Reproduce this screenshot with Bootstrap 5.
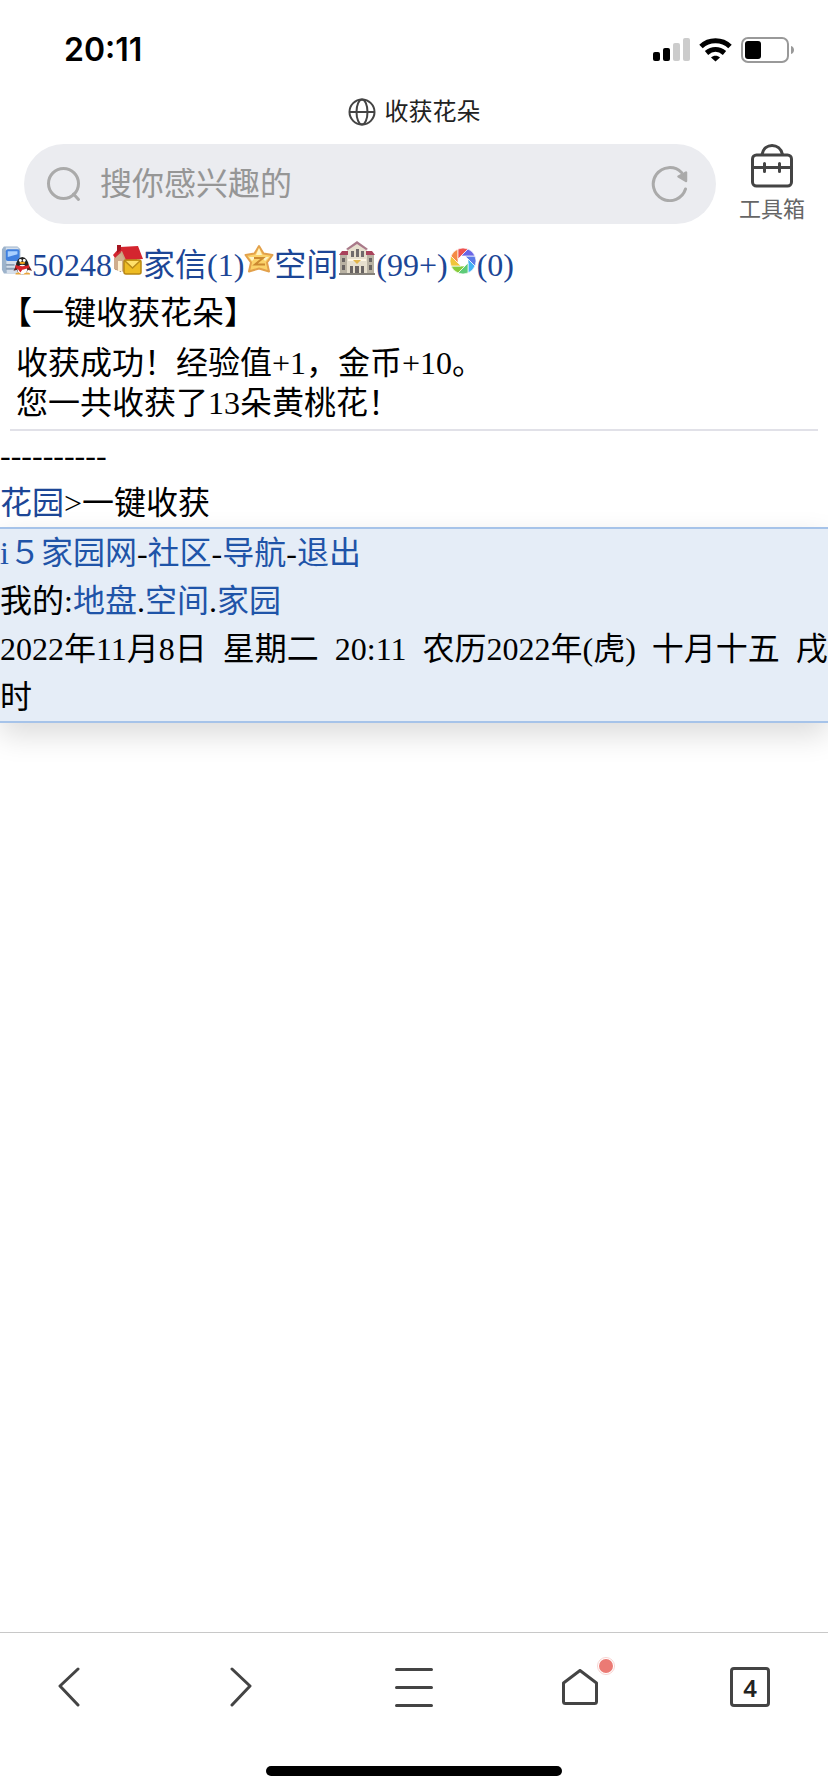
<!DOCTYPE html>
<html lang="zh-CN">
<head>
<meta charset="utf-8">
<meta name="viewport" content="width=device-width, initial-scale=1">
<title>收获花朵</title>
<link href="https://cdn.jsdelivr.net/npm/bootstrap@5.3.0/dist/css/bootstrap.min.css" rel="stylesheet">
<style>
  body { font-family: "Liberation Serif", "Noto Sans CJK SC", serif; font-size: 32px; line-height: 48px; color: #000; background: #fff; }
  a { color: #1c4696; text-decoration: none; }
  svg { display: block; flex-shrink: 0; }
  .ui-text { font-family: "Inter", "Noto Sans CJK SC", sans-serif; }
  .status-bar { padding: 32px 34px 26px 64px; line-height: 36px; }
  .clock { font-size: 32px; font-weight: 600; }
  .page-title { font-size: 24px; line-height: 36px; gap: 9px; color: #222; font-weight: 400; }
  .search-row { padding: 14px 0 16px 24px; }
  .search-box { height: 80px; background: #ebecf0; padding: 0 28px 0 23px; }
  .search-box input { font-size: 32px; line-height: 48px; padding: 0 0 0 19px; color: #333; min-width: 0; }
  .search-box input::placeholder { color: #969696; opacity: 1; }
  .search-box input:focus { outline: none; }
  .plain-btn { background: none; border: 0; padding: 0; color: #444; }
  .tools { width: 112px; font-size: 22px; line-height: 30px; color: #666; }
  .tools span { padding-top: 6px; }
  .shortcuts svg { display: inline-block; vertical-align: baseline; }
  .notice { margin: 6px 10px 0; padding: 0 6px 6px; line-height: 40px; border-bottom: 2px solid #e1e1e8; }
  .site-foot { background: #e5edf7; border-top: 2px solid #a6c3e9; border-bottom: 2px solid #a6c3e9; box-shadow: 0 12px 28px rgba(0,0,0,.14); }
  .site-foot a { color: #1f54a8; }
  .tool-bar { border-top: 1px solid #c8c8c8; background: #fff; }
  .tool-nav { height: 108px; padding: 0 47px 0 43px; }
  .tool-nav button { height: 60px; }
  .w-arrow { width: 52px; } .w-menu { width: 54px; } .w-home { width: 38px; } .w-tabs { width: 62px; }
  .dot { position: absolute; top: 0; right: -16px; width: 18px; height: 18px; }
  .tab-count { width: 40px; height: 40px; border: 3px solid #444; border-radius: 4px; font: 600 24px/36px "Noto Sans", sans-serif; color: #222; }
  .home-line { width: 296px; height: 10px; margin: 25px auto 16px; background: #000; }
</style>
</head>
<body class="d-flex flex-column min-vh-100">
<header class="ui-text">
  <div class="status-bar d-flex align-items-center justify-content-between">
    <span class="clock">20:11</span>
    <div class="d-flex align-items-center" style="gap:9px">
      <svg width="37" height="24" viewBox="0 0 37 24"><g fill="#000"><rect y="14" width="7" height="9" rx="2"/><rect x="10" y="10" width="7" height="13" rx="2"/></g><g fill="#ccc"><rect x="20" y="5" width="7" height="18" rx="2"/><rect x="30" width="7" height="23" rx="2"/></g></svg>
      <svg width="33" height="24" viewBox="0 0 33 24"><g fill="none" stroke="#000" stroke-width="5"><path d="M2 8.500C10 .8 23 .8 31 8.500"/><path d="M7.500 15C13 10.200 20 10.200 25.500 15"/></g><path d="M16.500 23.500L12 19.500c2.500-2.300 6.500-2.300 9 0z"/></svg>
      <svg width="53" height="26" viewBox="0 0 53 26"><rect x="1" y="1" width="46" height="24" rx="6" fill="none" stroke="#999" stroke-width="2"/><rect x="4" y="4" width="16" height="18" rx="3"/><path d="M50 9c4 1 4 7 0 8z" fill="#999"/></svg>
    </div>
  </div>
  <h1 class="page-title d-flex align-items-center justify-content-center m-0">
    <svg width="28" height="28" viewBox="0 0 28 28" fill="none" stroke="#444" stroke-width="2"><circle cx="14" cy="14" r="12.500"/><ellipse cx="14" cy="14" rx="5.500" ry="12.500"/><path d="M1.500 14h25"/></svg>
    <span>收获花朵</span>
  </h1>
  <div class="search-row d-flex align-items-center">
    <form class="search-box rounded-pill d-flex align-items-center flex-grow-1">
      <svg width="34" height="36" viewBox="0 0 34 36" fill="none" stroke="#aaa" stroke-width="3" stroke-linecap="round"><circle cx="16.500" cy="17.500" r="15"/><path d="M26.500 28l5 5.500"/></svg>
      <input class="flex-grow-1 border-0 bg-transparent" type="text" placeholder="搜你感兴趣的" aria-label="搜索">
      <button class="plain-btn" type="button" aria-label="刷新">
        <svg width="37" height="36" viewBox="0 0 37 36"><path d="M34.500 23a16.500 16.500 0 1 1-4-16.500" fill="none" stroke="#aaa" stroke-width="3" stroke-linecap="round"/><path d="M35 6.500v8.500l-7.500-4.500z" fill="#aaa" stroke="#aaa" stroke-width="2.500" stroke-linejoin="round"/></svg>
      </button>
    </form>
    <button class="plain-btn tools d-flex flex-column align-items-center" type="button">
      <svg width="42" height="44" viewBox="0 0 42 44" fill="none" stroke="#444" stroke-width="3" stroke-linecap="round"><rect x="1.500" y="11" width="39" height="31" rx="4"/><path d="M11 10.500C13 -1.500 29-1.500 31.500 10.500M2 23.500h38M13.500 19.500v8M28.500 19.500v8"/></svg>
      <span>工具箱</span>
    </button>
  </div>
</header>

<main class="flex-grow-1">
  <div class="shortcuts"><a href="#"><svg width="32" height="31" viewBox="0 0 33 31"><path d="M4 1h14l3 3v25H4l-2-4V4z" fill="#9db3cb"/><path d="M6 2h13v27H7z" fill="#d5dfeb"/><rect x="6" y="4" width="14" height="12" rx="2" fill="#3f80e0"/><path d="M8 6h10v3L8 12z" fill="#a9d0ff"/><path d="M6 20h9M6 24h9" stroke="#8da0b7" stroke-width="2"/><ellipse cx="23" cy="21" rx="6.500" ry="9" fill="#222"/><path d="M17 19l-3 7 4-1zM29 19l4 7-5-1z" fill="#602020"/><ellipse cx="23" cy="25" rx="5" ry="5" fill="#fff"/><circle cx="21" cy="15.500" r="1.500" fill="#fff"/><circle cx="25" cy="15.500" r="1.500" fill="#fff"/><path d="M16 20c4 2 10 2 14 0v3c-3 1-5 2-7 2l-2 3-2-3-3-2z" fill="#d8232a"/><ellipse cx="23" cy="18" rx="3" ry="1.200" fill="#f5a21c"/><path d="M16 29c2-2 5-1 6 1h-6zM24 30c1-2 5-3 7-1v1z" fill="#e9a43c"/></svg>50248<svg width="31" height="31" viewBox="0 0 31 31"><path d="M3 11L13 4l12 8v15L3 25z" fill="#c8a27e"/><path d="M3 12l6-5v20l-6-3z" fill="#8c7664"/><path d="M2 13L9 8l3 6v13L2 24z" fill="#cfae8d"/><rect x="6" y="16" width="4" height="10" fill="#fff1cf"/><path d="M1 10L8 2l18-1 5 13-17 1L10 6 3 13z" fill="#d4252f"/><path d="M5 0h4v5L5 8z" fill="#a51520"/><rect x="12" y="15" width="17" height="14" rx="2" fill="#eebc23" stroke="#b88612" stroke-width="1.500"/><path d="M13 16l7.500 7L28 16" fill="#ffe16b" stroke="#b98b18" stroke-width="1.500"/></svg>家信(1)</a><a href="#"><svg width="30" height="32" viewBox="0 0 30 32"><path d="M15 2l4.500 7.500 9 1.500-5.500 7.500 2 9L15 24.500 5 27.500l2-9L1.500 11l9-1.500z" fill="#fbd36a" stroke="#e3a14b" stroke-width="2" stroke-linejoin="round"/><path d="M15 4l3 7h-6zM5 13h7l-4 4zM18 13h7l-4 4z" fill="#fff4c6"/><path d="M10 14h9l-8 6.500h10" fill="none" stroke="#cc8a30" stroke-width="2"/></svg>空间</a><a href="#"><svg width="38" height="36" viewBox="0 0 38 36"><path d="M2 14h34v20H2z" fill="#b9b2a3"/><path d="M9 8l10-6 10 6v26H9z" fill="#e6dfce"/><path d="M8 9L19 1l11 8-2 1-9-6-9 6z" fill="#a9798a"/><path d="M1 15l3-4h6v4zM28 11h6l3 4h-9z" fill="#a9435b"/><path d="M13 11h3v6h-3zM18 9h3v8h-3zM23 11h3v6h-3z" fill="#706b6c"/><path d="M10 19h18v2H10z" fill="#fff7e5"/><path d="M15 20l4 4 4-4z" fill="#e2b64c"/><g fill="#696463"><path d="M4 18h3v4H4zM4 25h3v5H4zM31 18h3v4h-3zM31 25h3v5h-3zM12 26h3v8h-3zM17 26h4v8h-4zM23 26h3v8h-3z"/></g><path d="M1 33h36v2H1z" fill="#85817a"/></svg>(99+)<svg width="29" height="30" viewBox="0 0 29 30"><g transform="translate(15 15)" stroke="#fff" stroke-width=".7"><path d="M2-5L12-5A13 13 0 0 1 12 5L5-2z" fill="#5b7ae8"/><path d="M5-2L12 5A13 13 0 0 1 5 12L5 2z" fill="#43b2f5"/><path d="M5 2L5 12A13 13 0 0 1-5 12L2 5z" fill="#5ecb78"/><path d="M2 5L-5 12A13 13 0 0 1-12 5L-2 5z" fill="#86cc3c"/><path d="M-2 5L-12 5A13 13 0 0 1-12-5L-5 2z" fill="#f0c53a"/><path d="M-5 2L-12-5A13 13 0 0 1-5-12L-5-2z" fill="#f58a45"/><path d="M-5-2L-5-12A13 13 0 0 1 5-12L-2-5z" fill="#ee5350"/><path d="M-2-5L5-12A13 13 0 0 1 12-5L2-5z" fill="#6a66e6"/></g></svg>(0)</a></div>
  <div>【一键收获花朵】</div>
  <div class="notice">收获成功！经验值+1，金币+10。<br>您一共收获了13朵黄桃花！</div>
  <div>----------</div>
  <div><a href="#">花园</a>&gt;一键收获</div>
  <div class="site-foot">
    <div><a href="#">i５家园网</a>-<a href="#">社区</a>-<a href="#">导航</a>-<a href="#">退出</a></div>
    <div>我的:<a href="#">地盘</a>.<a href="#">空间</a>.<a href="#">家园</a></div>
    <div>2022年11月8日&nbsp; 星期二&nbsp; 20:11&nbsp; 农历2022年(虎)&nbsp; 十月十五&nbsp; 戌时</div>
  </div>
</main>

<footer class="tool-bar">
  <nav class="tool-nav d-flex align-items-center justify-content-between">
    <button class="plain-btn w-arrow d-flex align-items-center justify-content-center" type="button" aria-label="后退"><svg width="22" height="40" viewBox="0 0 22 40" fill="none" stroke="#444" stroke-width="3" stroke-linecap="round" stroke-linejoin="round"><path d="M20 2L2 19l18 19"/></svg></button>
    <button class="plain-btn w-arrow d-flex align-items-center justify-content-center" type="button" aria-label="前进"><svg width="22" height="40" viewBox="0 0 22 40" fill="none" stroke="#444" stroke-width="3" stroke-linecap="round" stroke-linejoin="round"><path d="M2 2l18 17L2 38"/></svg></button>
    <button class="plain-btn w-menu d-flex align-items-center justify-content-center" type="button" aria-label="菜单"><svg width="38" height="40" viewBox="0 0 38 40" fill="none" stroke="#444" stroke-width="3" stroke-linecap="round"><path d="M1.500 2.500h35M1.500 20.500h35M1.500 38.500h35"/></svg></button>
    <button class="plain-btn w-home position-relative d-flex align-items-center justify-content-center" type="button" aria-label="主页"><svg width="36" height="36" viewBox="0 0 36 36" fill="none" stroke="#444" stroke-width="3" stroke-linejoin="round"><path d="M18 1.500L34.500 14v18.500q0 2-2 2h-29q-2 0-2-2V14z"/></svg><svg class="dot" viewBox="0 0 18 18"><circle cx="9" cy="9" r="8.500" fill="#fff" stroke="#f8d3d1"/><circle cx="9" cy="9" r="7" fill="#eb7a74"/></svg></button>
    <button class="plain-btn w-tabs d-flex align-items-center justify-content-center" type="button" aria-label="标签页"><span class="tab-count">4</span></button>
  </nav>
  <div class="home-line rounded-pill"></div>
</footer>
<script src="https://cdn.jsdelivr.net/npm/bootstrap@5.3.0/dist/js/bootstrap.bundle.min.js"></script>
</body>
</html>
